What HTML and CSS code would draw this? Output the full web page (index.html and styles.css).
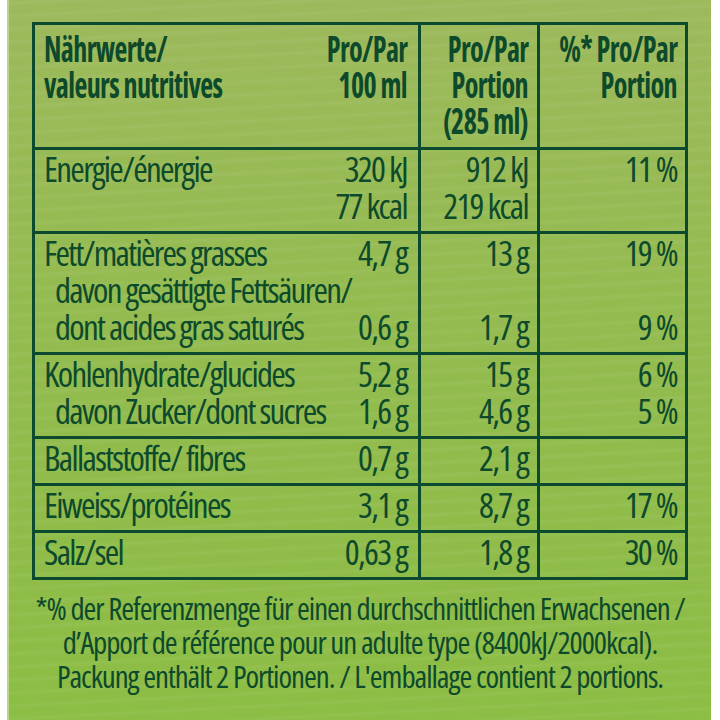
FILE: index.html
```html
<!DOCTYPE html>
<html lang="de">
<head>
<meta charset="utf-8">
<title>Nährwerte</title>
<link rel="stylesheet" href="styles.css">
</head>
<body>
<div class="panel">
  <div class="table">
    <div class="cell c1 head">
      <div class="line"><span class="hx left">Nährwerte/</span><span class="hx">Pro/Par</span></div>
      <div class="line"><span class="hx left">valeurs nutritives</span><span class="hx">100 ml</span></div>
    </div>
    <div class="cell c2 head">
      <div class="line"><span class="hx">Pro/Par</span></div>
      <div class="line"><span class="hx">Portion</span></div>
      <div class="line"><span class="hx">(285 ml)</span></div>
    </div>
    <div class="cell c3 head">
      <div class="line"><span class="hx">%* Pro/Par</span></div>
      <div class="line"><span class="hx">Portion</span></div>
    </div>

    <div class="cell c1">
      <div class="line"><span>Energie/énergie</span><span>320 kJ</span></div>
      <div class="line"><span></span><span>77 kcal</span></div>
    </div>
    <div class="cell c2">
      <div class="line">912 kJ</div>
      <div class="line">219 kcal</div>
    </div>
    <div class="cell c3">
      <div class="line">11 %</div>
    </div>

    <div class="cell c1">
      <div class="line"><span>Fett/matières grasses</span><span>4,7 g</span></div>
      <div class="line sub"><span>davon gesättigte Fettsäuren/</span></div>
      <div class="line sub"><span>dont acides gras saturés</span><span>0,6 g</span></div>
    </div>
    <div class="cell c2">
      <div class="line">13 g</div>
      <div class="line"></div>
      <div class="line">1,7 g</div>
    </div>
    <div class="cell c3">
      <div class="line">19 %</div>
      <div class="line"></div>
      <div class="line">9 %</div>
    </div>

    <div class="cell c1">
      <div class="line"><span>Kohlenhydrate/glucides</span><span>5,2 g</span></div>
      <div class="line sub"><span>davon Zucker/dont sucres</span><span>1,6 g</span></div>
    </div>
    <div class="cell c2">
      <div class="line">15 g</div>
      <div class="line">4,6 g</div>
    </div>
    <div class="cell c3">
      <div class="line">6 %</div>
      <div class="line">5 %</div>
    </div>

    <div class="cell c1">
      <div class="line"><span>Ballaststoffe/ fibres</span><span>0,7 g</span></div>
    </div>
    <div class="cell c2">
      <div class="line">2,1 g</div>
    </div>
    <div class="cell c3">
      <div class="line"></div>
    </div>

    <div class="cell c1">
      <div class="line"><span>Eiweiss/protéines</span><span>3,1 g</span></div>
    </div>
    <div class="cell c2">
      <div class="line">8,7 g</div>
    </div>
    <div class="cell c3">
      <div class="line">17 %</div>
    </div>

    <div class="cell c1">
      <div class="line"><span>Salz/sel</span><span>0,63 g</span></div>
    </div>
    <div class="cell c2">
      <div class="line">1,8 g</div>
    </div>
    <div class="cell c3">
      <div class="line">30 %</div>
    </div>
  </div>

  <div class="note">
    <div>*% der Referenzmenge für einen durchschnittlichen Erwachsenen /</div>
    <div>d’Apport de référence pour un adulte type (8400kJ/2000kcal).</div>
    <div>Packung enthält 2 Portionen. / L'emballage contient 2 portions.</div>
  </div>
</div>
</body>
</html>
```
FILE: styles.css
```css
html, body {
  margin: 0;
  padding: 0;
  background: #ffffff;
}

body {
  font-family: "Open Sans", "Liberation Sans", sans-serif;
  font-stretch: 75%;
  font-weight: 500;
  color: #0d4a2c;
}

.panel {
  margin-left: 7px;
  width: 704px;
  height: 720px;
  box-sizing: border-box;
  border-left: 2px solid #b9d48c;
  background:
    repeating-linear-gradient(177deg, rgba(255,255,255,0.00) 0px, rgba(255,255,255,0.05) 3px, rgba(255,255,255,0.00) 7px, rgba(255,255,255,0.00) 13px),
    linear-gradient(180deg, #9db95c 0%, #94bb50 40%, #8cbd44 100%);
  overflow: hidden;
}

.table {
  display: grid;
  grid-template-columns: 386px 119px 148px;
  width: 656px;
  box-sizing: border-box;
  margin: 22px auto 0;
  border-top: 3px solid #0b4a2e;
  border-left: 3px solid #0b4a2e;
}

.cell {
  box-sizing: border-box;
  border-right: 3px solid #0b4a2e;
  border-bottom: 3px solid #0b4a2e;
  padding-top: 0;
  padding-bottom: 7px;
  font-size: 35px;
  line-height: 37px;
  letter-spacing: -1.7px;
  white-space: nowrap;
}

.cell.head {
  font-size: 36px;
  font-weight: 700;
  letter-spacing: -0.8px;
  line-height: 36px;
  padding-top: 6px;
  padding-bottom: 8px;
}

.hx {
  display: inline-block;
  transform: scaleX(0.78);
  transform-origin: right center;
}

.hx.left {
  transform-origin: left center;
}

.c1 {
  padding-left: 9px;
  padding-right: 11px;
}

.c2 {
  padding-right: 9px;
}

.c3 {
  padding-right: 8px;
}

.line {
  height: 37px;
}

.head .line {
  height: 36px;
}

.c1 .line {
  display: flex;
  justify-content: space-between;
}

.c2 .line,
.c3 .line {
  display: flex;
  justify-content: flex-end;
}

.line.sub {
  padding-left: 11px;
}

.note {
  margin-top: 11px;
  text-align: center;
  font-size: 31px;
  line-height: 34px;
  letter-spacing: -1.05px;
  white-space: nowrap;
}
```
